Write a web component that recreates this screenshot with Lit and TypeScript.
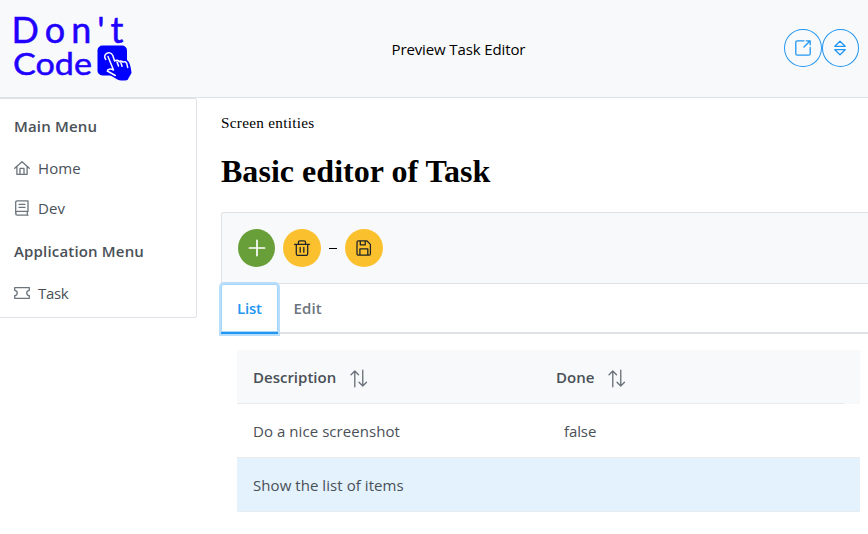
import { LitElement, html, css, svg } from "lit";
import { customElement, property } from "lit/decorators.js";

const icons: Record<string, unknown> = {
  home: svg`<path d="M.7 8.2 8 1.8l7.300 6.400M2.900 6.600v7.800h10.200V6.600M6 14.400V8.400h4v6"/>`,
  book: svg`<path d="M14 11.400V.8H3.200C2.300.8 1.700 1.500 1.700 2.400v11.200c0 .9.6 1.600 1.500 1.600H14M14 11.400H3.300c-2 0-2 3.800 0 3.800M13.300 11.400v3.800M5 4.300h6M5 7.300h6"/>`,
  ticket: svg`<path d="M.7 2.700h14.600v2.600c-3.400.5-3.400 4.900 0 5.400v2.600H.7v-2.600c3.400-.5 3.400-4.900 0-5.400z"/>`,
  external: svg`<path d="M9 .8H2.300C1.400.8.8 1.400.8 2.300v11.400c0 .9.6 1.500 1.500 1.500h11.400c.9 0 1.500-.6 1.500-1.500V7.500M9 7 15 1M11.200.8h4v4"/>`,
  sort: svg`<path d="M8 1.200 13.200 6.300H2.800zM8 14.800 13.200 9.700H2.800z"/>`,
  plus: svg`<path stroke-width="1.700" d="M8 .4v15.200M.4 8h15.200"/>`,
  trash: svg`<path d="M.5 4.300h15M2.300 4.300v9.500c0 .9.500 1.500 1.400 1.500h8.600c.9 0 1.400-.6 1.400-1.500V4.300M4.500 4.300V2.100c0-.8.500-1.300 1.300-1.300h4.400c.8 0 1.300.5 1.300 1.300v2.200M6.200 7.500v4.700M9.800 7.500v4.700"/>`,
  save: svg`<path d="M2.500.8h8.300l3.600 3.600v9.300c0 .9-.6 1.500-1.500 1.500H2.500c-.9 0-1.500-.6-1.500-1.500V2.300C1 1.400 1.600.8 2.500.8zM4.300.8v4.100h4.900V.8M3.900 15.200V8.800h7.900v6.400"/>`,
  updown: svg`<path d="M4.500 15.800V.9M1 4.400 4.500.9 8 4.400M12 .2v14.900M8.500 11.600l3.500 3.500 3.500-3.500"/>`,
};

@customElement("line-icon")
class LineIcon extends LitElement {
  @property() name = "";
  static styles = css`
    :host { display: inline-flex; flex: none; width: 16px; height: 16px; }
    svg { width: 100%; height: 100%; overflow: visible; fill: none; stroke: currentColor; stroke-width: 1.3; stroke-linejoin: round; stroke-linecap: round; }
  `;
  render() {
    return html`<svg viewBox="0 0 16 16">${icons[this.name]}</svg>`;
  }
}

@customElement("app-root")
class AppRoot extends LitElement {
  static styles = css`
    :host { display: block; height: 534px; overflow: hidden; background: #fff; font: 15px/24px "Open Sans", "Noto Sans", sans-serif; color: #495057; white-space: nowrap; }
    * { box-sizing: border-box; }
    header { height: 98px; display: grid; grid-template-columns: 391.500px 1fr auto; align-items: center; padding-right: 9px; background: #f8f9fa; border-bottom: 1px solid #dee2e6; }
    .logo { display: block; width: 140px; height: 97px; }
    .logo text { fill: #2000ff; stroke: #2000ff; stroke-width: .5px; font-family: "Lato", sans-serif; }
    .title { color: #000; letter-spacing: -0.12px; }
    .actions { display: flex; padding-bottom: 1px; }
    .round { width: 37.500px; height: 38px; border: 0; border-radius: 50%; padding: 0; display: flex; align-items: center; justify-content: center; }
    .outline { background: none; border: 1px solid #2196f3; color: #2196f3; }
    .body { display: flex; align-items: flex-start; }
    nav { width: 197px; height: 220px; flex: none; padding: 4px 14px; border: 1px solid #dee2e6; border-left: 0; border-radius: 0 3px 3px 0; }
    nav h2 { margin: 0; height: 45px; display: flex; align-items: center; font-size: 15px; font-weight: 600; letter-spacing: 0.17px; }
    nav a { height: 40px; display: flex; align-items: center; gap: 8px; }
    nav a span { letter-spacing: 0.1px; }
    nav a:last-child span { letter-spacing: -0.3px; }
    nav line-icon { color: #6c757d; }
    main { flex: 1; min-width: 0; padding: 13px 0 0 24px; }
    .crumb { font: 15.200px/24px "Liberation Serif", serif; color: #000; letter-spacing: 0.3px; }
    h1 { margin: 18px 0 22px; font: bold 32px/37px "Liberation Serif", serif; color: #000; letter-spacing: 0.03px; }
    .toolbar { height: 72px; display: flex; align-items: center; padding: 0 16px; background: #f8f9fa; border: 1px solid #dee2e6; border-right: 0; border-radius: 3px 0 0 0; }
    .add { width: 37px; background: #689f38; color: #fff; margin-right: 8px; }
    .warn { width: 38px; background: #fbc02d; color: #212529; }
    .dash { width: 24px; display: flex; justify-content: center; }
    .dash::before { content: ""; width: 8px; height: 1px; background: #000; }
    .tabs { height: 50px; display: flex; border-bottom: 2px solid #dee2e6; font-weight: 600; color: #6c757d; }
    .tab { height: 48px; padding: 0 16px; display: flex; align-items: center; letter-spacing: 0.1px; }
    .tab:last-child { height: 47px; }
    .active { height: 50px; width: 56.500px; color: #2196f3; border-bottom: 2px solid #2196f3; border-radius: 3px 3px 0 0; box-shadow: inset 0 0 0 1px #a6d5fa, 0 0 0 2px #b9defb; background: #fff; letter-spacing: -0.2px; position: relative; }
    .table { margin: 16px 8px 0 16px; }
    .row { height: 54px; display: grid; grid-template-columns: 303px 1fr; align-items: center; padding-left: 16px; border-bottom: 1px solid #e9ecef; }
    .head { background: #f8f9fa; font-weight: 600; border-bottom: 0; align-items: stretch; padding: 0 16px 0 0; grid-template-columns: 319px 1fr; }
    .head div { display: flex; align-items: center; border-bottom: 1px solid #e9ecef; padding-top: 1px; }
    .head div:first-child { padding-left: 16px; }
    .head line-icon { margin: 3px 0 0 14px; color: #6c757d; width: 17px; height: 17px; }
    .row > span { letter-spacing: 0.06px; }
    .row .value { padding-left: 8px; letter-spacing: -0.1px; }
    .selected { background: #e3f2fd; }
  `;

  render() {
    return html`
      <header>
        <svg class="logo" viewBox="0 0 140 97">
          <text x="11.500" y="42.500" font-size="36" textLength="112">Don't</text>
          <text x="13" y="74.500" font-size="31.500" textLength="79" lengthAdjust="spacingAndGlyphs">Code</text>
          <rect x="97.500" y="45.500" width="29.500" height="30" rx="5" fill="#0000ff"/>
          <path d="M111 60 127 60c3 2 4 8 4.500 13l-4 7c-4 1-8 .8-11-1l-10-6z" fill="#0000ff"/>
          <path d="M105.800 59.500c-4-5 4-10 7-4l1.800 5.500c2-1.500 4-.8 4.500.8 1-1.300 3-1 3.800.4 1.500-1 3-.5 3.800 1.200l1 4M108 56.500l5.500 13.500c-3-1.700-6-.7-6.200 1l8 4.500M117 62l1.500 4M120.800 62.600l1.300 3.700" fill="none" stroke="#fff" stroke-width="1.500" stroke-linejoin="round" stroke-linecap="round"/>
        </svg>
        <span class="title">Preview Task Editor</span>
        <div class="actions">
          <button class="round outline"><line-icon name="external"></line-icon></button>
          <button class="round outline"><line-icon name="sort"></line-icon></button>
        </div>
      </header>
      <div class="body">
        <nav>
          <h2>Main Menu</h2>
          <a><line-icon name="home"></line-icon><span>Home</span></a>
          <a><line-icon name="book"></line-icon><span>Dev</span></a>
          <h2>Application Menu</h2>
          <a><line-icon name="ticket"></line-icon><span>Task</span></a>
        </nav>
        <main>
          <div class="crumb">Screen entities</div>
          <h1>Basic editor of Task</h1>
          <div class="toolbar">
            <button class="round add"><line-icon name="plus"></line-icon></button>
            <button class="round warn"><line-icon name="trash"></line-icon></button>
            <span class="dash"></span>
            <button class="round warn"><line-icon name="save"></line-icon></button>
          </div>
          <div class="tabs">
            <div class="tab active">List</div>
            <div class="tab">Edit</div>
          </div>
          <div class="table">
            <div class="row head">
              <div><span>Description</span><line-icon name="updown"></line-icon></div>
              <div><span>Done</span><line-icon name="updown"></line-icon></div>
            </div>
            <div class="row"><span>Do a nice screenshot</span><span class="value">false</span></div>
            <div class="row selected"><span>Show the list of items</span></div>
          </div>
        </main>
      </div>
    `;
  }
}
